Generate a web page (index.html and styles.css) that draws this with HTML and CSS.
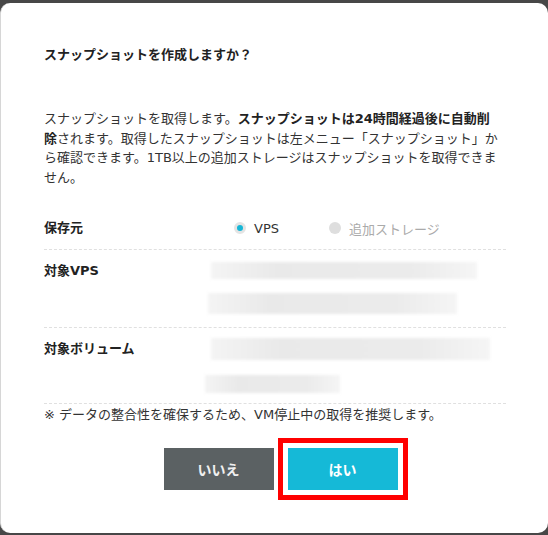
FILE: index.html
```html
<!DOCTYPE html>
<html lang="ja">
<head>
  <meta charset="utf-8">
  <title>スナップショット作成</title>
  <link rel="stylesheet" href="styles.css">
</head>
<body>
  <div class="dialog">
    <h2 class="dialog-title">スナップショットを作成しますか？</h2>
    <p class="dialog-text">スナップショットを取得します。<b>スナップショットは24時間経過後に自動削除</b>されます。取得したスナップショットは左メニュー「スナップショット」から確認できます。1TB以上の追加ストレージはスナップショットを取得できません。</p>

    <div class="form">
      <div class="form-row row-source">
        <div class="form-label">保存元</div>
        <div class="form-value radios">
          <span class="radio checked"></span><span class="radio-text">VPS</span>
          <span class="radio disabled"></span><span class="radio-text muted">追加ストレージ</span>
        </div>
      </div>
      <div class="form-row row-vps">
        <div class="form-label">対象VPS</div>
        <div class="form-value">
          <div class="masked m1"></div>
          <div class="masked m2"></div>
        </div>
      </div>
      <div class="form-row row-volume">
        <div class="form-label">対象ボリューム</div>
        <div class="form-value">
          <div class="masked m3"></div>
          <div class="masked m4"></div>
        </div>
      </div>
    </div>

    <p class="note">※ データの整合性を確保するため、VM停止中の取得を推奨します。</p>

    <div class="buttons">
      <button class="btn btn-cancel">いいえ</button>
      <button class="btn btn-ok">はい</button>
    </div>
  </div>
</body>
</html>
```

FILE: styles.css
```css
html, body {
  margin: 0;
  height: 535px;
  overflow: hidden;
}
body {
  background: #474747;
  font-family: "DejaVu Sans", "Noto Sans CJK JP", sans-serif;
  font-size: 13px;
  color: #333;
}

.dialog {
  box-sizing: border-box;
  margin-top: 3px;
  height: 530px;
  background: #fff;
  border-left: 1px solid #d6d6d6;
  border-radius: 10px;
  padding: 43px 42px 0 43px;
}

.dialog-title {
  margin: 0;
  font-size: 13px;
  line-height: 18px;
  font-weight: bold;
  color: #222;
}

.dialog-text {
  margin: 45px 0 0;
  max-width: 457px;
  line-height: 1.5;
}
.dialog-text b { color: #222; }

/* form rows */
.form { margin-top: 20px; }
.form-row {
  display: flex;
  padding: 10px 0;
  border-bottom: 1px dashed #e0e0e0;
}
.form-label {
  width: 161px;
  flex: none;
  line-height: 22px;
  font-weight: bold;
  color: #222;
}
.form-value { flex: 1; }

.radios {
  display: flex;
  align-items: center;
  height: 22px;
  padding-left: 29px;
}
.radio {
  box-sizing: border-box;
  width: 12px;
  height: 12px;
  border-radius: 50%;
  background: #dedede;
  flex: none;
}
.radio.checked {
  background: #16b6d6;
  border: 3px solid #e4e4e4;
}
.radio-text { margin-left: 8px; }
.radio-text.muted { color: #aaa; }
.radio.disabled { margin-left: 50px; }

/* values hidden behind a blur */
.masked {
  background: linear-gradient(90deg, #f4f4f4, #e9e9e9 25%, #ebebeb 75%, #f5f5f5);
  filter: blur(1.5px);
}
.row-vps { padding-bottom: 13px; }
.m1 { margin: 2px 0 0 6px; width: 266px; height: 17px; }
.m2 { margin: 14px 0 0 3px; width: 249px; height: 21px; }
.m3 { margin: 0 0 0 6px; width: 279px; height: 22px; }
.m4 { margin: 15px 0 0 0; width: 135px; height: 18px; }

.note {
  margin: 0;
  line-height: 21px;
}

.buttons {
  display: flex;
  justify-content: center;
  gap: 14px;
  margin-top: 23px;
  padding-left: 11px;
}
.btn {
  width: 110px;
  height: 42px;
  border: 0;
  border-radius: 0;
  color: #fff;
  font-family: inherit;
  font-size: 14px;
  font-weight: bold;
}
.btn-cancel { background: #5b6163; color: #f0f0f0; }
.btn-ok {
  background: #15b9d7;
  outline: 5px solid #f00;
  outline-offset: 5px;
}
```
